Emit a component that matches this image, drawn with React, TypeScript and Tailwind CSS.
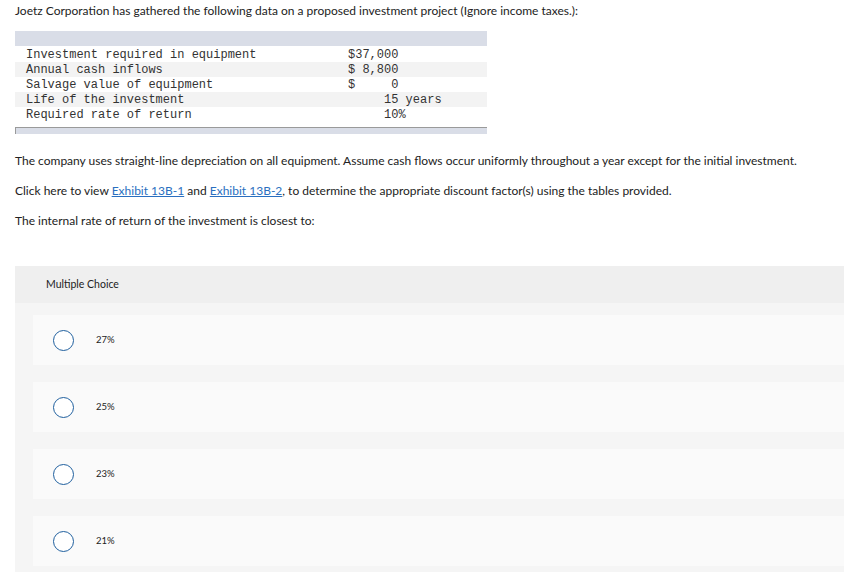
const rows = [
  { label: "Investment required in equipment", value: "$37,000" },
  { label: "Annual cash inflows", value: "$ 8,800" },
  { label: "Salvage value of equipment", value: "$     0" },
  { label: "Life of the investment", value: "     15 years" },
  { label: "Required rate of return", value: "     10%" },
];

const choices = ["27%", "25%", "23%", "21%"];

export default function App() {
  return (
    <div
      className="w-[844px] h-[573px] overflow-hidden bg-white text-[#222]"
      style={{ fontFamily: "Lato, 'Open Sans', sans-serif" }}
    >
      <p className="pl-[15px] pt-[4px] text-[12px] leading-[14px]">
        Joetz Corporation has gathered the following data on a proposed investment project (Ignore income taxes.):
      </p>

      {/* data table */}
      <div className="ml-[15px] mt-[13px] w-[472px] font-['Liberation_Mono',monospace] text-[12px] text-[#333]">
        <div className="h-[15px] bg-[#d9dde7]" />
        <div className="mt-[1px]">
          {rows.map((r, i) => (
            <div
              key={r.label}
              className={`flex h-[15px] items-center pt-[2px] leading-[15px] ${i % 2 === 1 ? "bg-[#f3f3f3]" : "bg-white"}`}
            >
              <span className="w-[333px] shrink-0 pl-[11px]">{r.label}</span>
              <span className="whitespace-pre">{r.value}</span>
            </div>
          ))}
        </div>
        <div className="mt-[5px] h-[7px] border-l border-t border-[#9a9a9a] bg-[#d9dde7]" />
      </div>

      <div className="pl-[15px] pt-[20px] text-[12px] leading-[14px]">
        <p>
          The company uses straight-line depreciation on all equipment. Assume cash flows occur uniformly throughout a year except for the initial investment.
        </p>
        <p className="mt-[16px]">
          Click here to view{" "}
          <a className="text-[#2a6fc0] underline">Exhibit 13B-1</a> and{" "}
          <a className="text-[#2a6fc0] underline">Exhibit 13B-2</a>, to determine the appropriate discount factor(s) using the tables provided.
        </p>
        <p className="mt-[16px]">The internal rate of return of the investment is closest to:</p>
      </div>

      {/* multiple choice */}
      <div className="ml-[15px] mt-[38px] bg-[#f5f5f5] pb-[6px]">
        <div className="flex h-[37px] items-center bg-[#efefef] pl-[31px] text-[10.5px]">Multiple Choice</div>
        <div className="flex flex-col gap-[17px] pt-[12px] pl-[18px]">
          {choices.map((c) => (
            <div key={c} className="flex h-[50px] items-center bg-[#fafafa] pl-[20px]">
              <span className="h-[21px] w-[21px] rounded-full border-[1.5px] border-[#1f5f9e] bg-white" />
              <span className="ml-[22px] text-[9.5px]">{c}</span>
            </div>
          ))}
        </div>
      </div>
    </div>
  );
}
